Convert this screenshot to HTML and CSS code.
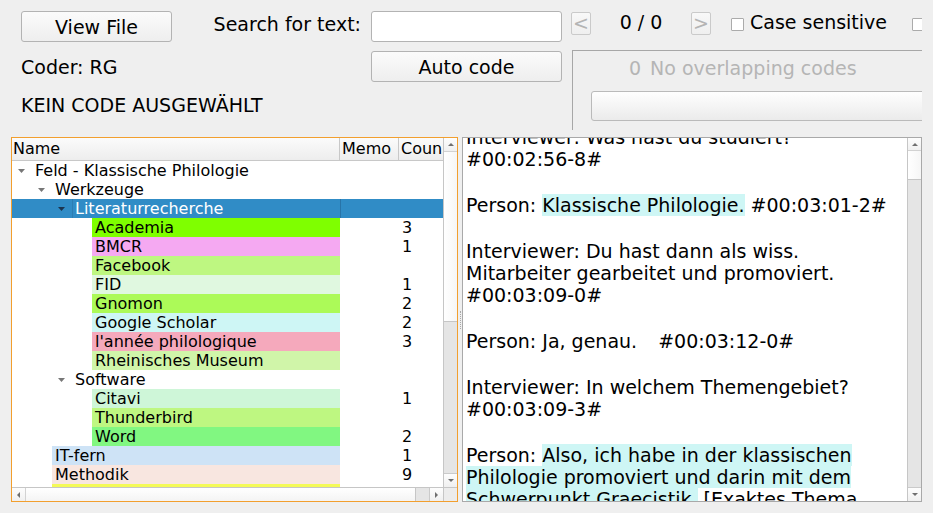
FILE: index.html
```html
<!DOCTYPE html>
<html>
<head>
<meta charset="utf-8">
<link rel="stylesheet" href="styles.css">
</head>
<body>
<div class="app">
  <div class="top">
    <div class="btn viewfile">View File</div>
    <div class="search-label">Search for text:</div>
    <div class="input"></div>
    <div class="searchnav">
      <div class="navbtn">&lt;</div>
      <div class="hits">0 / 0</div>
      <div class="navbtn">&gt;</div>
      <div class="check first"></div>
      <div class="check-label">Case sensitive</div>
      <div class="check second"></div>
    </div>
    <div class="coder">Coder: RG</div>
    <div class="btn autocode">Auto code</div>
    <div class="overlap">
      <div class="overlap-label"><span class="ov-num">0</span><span class="ov-text">No overlapping codes</span></div>
      <div class="combo"></div>
    </div>
    <div class="nocode">KEIN CODE AUSGEWÄHLT</div>
  </div>

  <div class="main">
    <div class="tree">
      <div class="tree-view">
        <div class="hdr">
          <div class="h-name">Name</div>
          <div class="h-memo">Memo</div>
          <div class="h-count">Coun</div>
        </div>
        <div class="row l0"><div class="name"><div class="branch"><svg width="7" height="4" viewBox="0 0 7 4"><path d="M0 0h7L3.5 4z" class="tri"/></svg></div><div class="label">Feld - Klassische Philologie</div></div><div class="memo"></div><div class="count"></div></div>
        <div class="row l1"><div class="name"><div class="branch"><svg width="7" height="4" viewBox="0 0 7 4"><path d="M0 0h7L3.5 4z" class="tri"/></svg></div><div class="label">Werkzeuge</div></div><div class="memo"></div><div class="count"></div></div>
        <div class="row l2 sel"><div class="name"><div class="branch"><svg width="7" height="4" viewBox="0 0 7 4"><path d="M0 0h7L3.5 4z" class="tri"/></svg></div><div class="label">Literaturrecherche</div></div><div class="memo"></div><div class="count"></div></div>
        <div class="row l3"><div class="name"><div class="branch"></div><div class="label c-academia">Academia</div></div><div class="memo"></div><div class="count">3</div></div>
        <div class="row l3"><div class="name"><div class="branch"></div><div class="label c-bmcr">BMCR</div></div><div class="memo"></div><div class="count">1</div></div>
        <div class="row l3"><div class="name"><div class="branch"></div><div class="label c-facebook">Facebook</div></div><div class="memo"></div><div class="count"></div></div>
        <div class="row l3"><div class="name"><div class="branch"></div><div class="label c-fid">FID</div></div><div class="memo"></div><div class="count">1</div></div>
        <div class="row l3"><div class="name"><div class="branch"></div><div class="label c-gnomon">Gnomon</div></div><div class="memo"></div><div class="count">2</div></div>
        <div class="row l3"><div class="name"><div class="branch"></div><div class="label c-google">Google Scholar</div></div><div class="memo"></div><div class="count">2</div></div>
        <div class="row l3"><div class="name"><div class="branch"></div><div class="label c-annee">l'année philologique</div></div><div class="memo"></div><div class="count">3</div></div>
        <div class="row l3"><div class="name"><div class="branch"></div><div class="label c-rhein">Rheinisches Museum</div></div><div class="memo"></div><div class="count"></div></div>
        <div class="row l2"><div class="name"><div class="branch"><svg width="7" height="4" viewBox="0 0 7 4"><path d="M0 0h7L3.5 4z" class="tri"/></svg></div><div class="label">Software</div></div><div class="memo"></div><div class="count"></div></div>
        <div class="row l3"><div class="name"><div class="branch"></div><div class="label c-citavi">Citavi</div></div><div class="memo"></div><div class="count">1</div></div>
        <div class="row l3"><div class="name"><div class="branch"></div><div class="label c-thunder">Thunderbird</div></div><div class="memo"></div><div class="count"></div></div>
        <div class="row l3"><div class="name"><div class="branch"></div><div class="label c-word">Word</div></div><div class="memo"></div><div class="count">2</div></div>
        <div class="row l1"><div class="name"><div class="branch"></div><div class="label c-itfern">IT-fern</div></div><div class="memo"></div><div class="count">1</div></div>
        <div class="row l1"><div class="name"><div class="branch"></div><div class="label c-methodik">Methodik</div></div><div class="memo"></div><div class="count">9</div></div>
        <div class="row l1"><div class="name"><div class="branch"></div><div class="label c-yellow"></div></div><div class="memo"></div><div class="count"></div></div>
      </div>
      <div class="vsb tree-vsb">
        <div class="sb-btn up"><svg width="6" height="3" viewBox="0 0 6 3"><path d="M0 3h6L3 0z" class="sbtri"/></svg></div>
        <div class="sb-handle tree-vh"></div>
        <div class="sb-track"></div>
        <div class="sb-btn down"><svg width="6" height="3" viewBox="0 0 6 3"><path d="M0 0h6L3 3z" class="sbtri"/></svg></div>
      </div>
      <div class="hsb">
        <div class="sb-hbtn left"><svg width="3" height="6" viewBox="0 0 3 6"><path d="M3 0v6L0 3z" class="sbtri"/></svg></div>
        <div class="sb-hhandle"></div>
        <div class="sb-htrack"></div>
        <div class="sb-hbtn right"><svg width="3" height="6" viewBox="0 0 3 6"><path d="M0 0v6L3 3z" class="sbtri"/></svg></div>
      </div>
      <div class="corner"></div>
    </div>

    <div class="splitter"><div class="grip"></div></div>

    <div class="textpanel">
      <div class="doc-wrap">
        <div class="doc">
          <p>Interviewer: Was hast du studiert?<br>#00:02:56-8#</p>
          <p>Person: <mark>Klassische Philologie.</mark> #00:03:01-2#</p>
          <p>Interviewer: Du hast dann als wiss.<br>Mitarbeiter gearbeitet und promoviert.<br>#00:03:09-0#</p>
          <p>Person: Ja, genau.<span class="gap"></span>#00:03:12-0#</p>
          <p>Interviewer: In welchem Themengebiet?<br>#00:03:09-3#</p>
          <p>Person: <mark>Also, ich habe in der klassischen<br>Philologie promoviert und darin mit dem<br>Schwerpunkt Graecistik.</mark> [Exaktes Thema</p>
        </div>
      </div>
      <div class="vsb text-vsb">
        <div class="sb-btn up small"><svg width="6" height="3" viewBox="0 0 6 3"><path d="M0 3h6L3 0z" class="sbtri"/></svg></div>
        <div class="sb-handle text-vh"></div>
        <div class="sb-track"></div>
        <div class="sb-btn down"><svg width="6" height="3" viewBox="0 0 6 3"><path d="M0 0h6L3 3z" class="sbtri"/></svg></div>
      </div>
    </div>
  </div>
</div>
</body>
</html>
```

FILE: styles.css
```css
* { box-sizing: border-box; }
html, body { margin: 0; padding: 0; }
body {
  background: #efefef;
  font-family: "DejaVu Sans", sans-serif;
  color: #000;
}
.app {
  width: 933px;
  height: 513px;
  padding: 11px;
  overflow: hidden;
  display: flex;
  flex-direction: column;
}

/* ---------- top area ---------- */
.top {
  width: 911px;
  height: 126px;
  flex: none;
  overflow: hidden;
  display: grid;
  grid-template-columns: 10px 151px 199px 191px 1fr;
  grid-template-rows: 31px 31px 1fr;
  row-gap: 9px;
  font-size: 19px;
}
.btn {
  border: 1px solid #b3b3b3;
  border-radius: 3px;
  background: linear-gradient(#fbfbfb, #eeeeee);
  display: flex;
  align-items: center;
  justify-content: center;
  color: #000;
}
.viewfile { grid-column: 2; grid-row: 1; }
.search-label {
  grid-column: 3; grid-row: 1;
  text-align: right;
  padding-right: 10px;
  padding-top: 2px;
  white-space: nowrap;
}
.input {
  grid-column: 4; grid-row: 1;
  background: #fff;
  border: 1px solid #b3b3b3;
  border-radius: 3px;
}
.searchnav {
  grid-column: 5; grid-row: 1;
  display: flex;
  align-items: flex-start;
  padding-left: 9px;
  white-space: nowrap;
}
.navbtn {
  width: 20px;
  height: 23px;
  margin-top: 1px;
  border: 1px solid #cacaca;
  border-radius: 2px;
  background: linear-gradient(#f8f8f8, #efefef);
  color: #b4b4b4;
  text-align: center;
  line-height: 20px;
  flex: none;
}
.hits { width: 100px; text-align: center; flex: none; }
.check {
  width: 13px;
  height: 13px;
  margin-top: 7px;
  border: 1px solid #ababab;
  background: #fff;
  border-radius: 1px;
  flex: none;
}
.check.first { margin-left: 20px; }
.check.second { margin-left: 25px; }
.check-label { margin-left: 6px; }

.coder { grid-column: 2 / 4; grid-row: 2; align-self: center; }
.autocode { grid-column: 4; grid-row: 2; }
.overlap {
  grid-column: 5; grid-row: 2 / 4;
  margin-left: 10px;
  margin-top: -1px;
  width: 400px;
  height: 80px;
  border-top: 1px solid #a7a7a7;
  border-left: 1px solid #a7a7a7;
  padding-top: 6px;
  align-self: start;
}
.overlap-label {
  display: flex;
  height: 22px;
  color: #b5b5b5;
  white-space: nowrap;
}
.ov-num { margin-left: 56px; }
.ov-text { margin-left: 9px; }
.combo {
  margin-top: 12px;
  margin-left: 18px;
  width: 380px;
  height: 30px;
  border: 1px solid #bababa;
  border-radius: 3px;
  background: linear-gradient(#fefefe, #ebebeb);
}
.nocode {
  grid-column: 2 / 5; grid-row: 3;
  padding-top: 3px;
  white-space: nowrap;
}

/* ---------- main area ---------- */
.main {
  display: flex;
  height: 365px;
  flex: none;
}
.tree {
  width: 447px;
  flex: none;
  border: 1px solid #f29f2e;
  background: #fff;
  display: grid;
  grid-template-columns: 431px 14px;
  grid-template-rows: 349px 14px;
}
.tree-view {
  overflow: hidden;
  font-size: 16px;
}
.hdr {
  display: flex;
  height: 23px;
  line-height: 22px;
  background: linear-gradient(#fbfbfb, #ededed);
  border-bottom: 1px solid #c8c8c8;
  white-space: nowrap;
}
.h-name { width: 328px; padding-left: 1px; border-right: 1px solid #c8c8c8; }
.h-memo { width: 59px; padding-left: 2px; border-right: 1px solid #c8c8c8; }
.h-count { width: 44px; padding-left: 2px; overflow: hidden; }

.row {
  display: flex;
  height: 19px;
  line-height: 19px;
  white-space: nowrap;
}
.name { width: 328px; display: flex; flex: none; }
.branch {
  flex: none;
  display: flex;
  align-items: center;
  justify-content: flex-end;
  padding-right: 7px;
}
.l0 .branch { width: 20px; }
.l1 .branch { width: 40px; }
.l2 .branch { width: 60px; }
.l3 .branch { width: 80px; }
.tri { fill: #777; }
.label { flex: 1; padding-left: 3px; overflow: hidden; }
.memo { width: 59px; flex: none; }
.count { width: 44px; flex: none; padding-left: 3px; }

.row.sel { background: #308cc6; color: #fff; }
.row.sel .tri { fill: #1b3550; }
.row.sel .label { box-shadow: inset 1px 0 #2b7db3; }
.row.sel .memo { box-shadow: inset 1px 0 #2874a8; }

.c-academia { background: #7fff00; }
.c-bmcr { background: #f5a9f2; }
.c-facebook { background: #bef781; }
.c-fid { background: #e0f8e0; }
.c-gnomon { background: #acfa58; }
.c-google { background: #cef6f5; }
.c-annee { background: #f5a9bc; }
.c-rhein { background: #d0f5a9; }
.c-citavi { background: #cef6d8; }
.c-thunder { background: #bef781; }
.c-word { background: #81f781; }
.c-itfern { background: #cee3f6; }
.c-methodik { background: #f8e6e0; }
.c-yellow { background: #f4fa58; }

/* scrollbars */
.vsb {
  display: flex;
  flex-direction: column;
  background: #e5e5e5;
  border-left: 1px solid #c6c6c6;
}
.sb-btn {
  height: 14px;
  flex: none;
  display: flex;
  align-items: center;
  justify-content: center;
  background: linear-gradient(#fdfdfd, #f0f0f0);
}
.sb-btn.small { height: 13px; }
.sb-btn.up { border-bottom: 1px solid #d2d2d2; }
.sb-btn.down { border-top: 1px solid #cacaca; }
.sbtri { fill: #6f6f6f; }
.sb-handle {
  flex: none;
  background: linear-gradient(90deg, #ffffff, #f6f6f6);
  border-bottom: 1px solid #c6c6c6;
}
.tree-vh { height: 170px; }
.text-vh { height: 29px; }
.sb-track { flex: 1; }

.hsb {
  display: flex;
  background: #e5e5e5;
  border-top: 1px solid #c6c6c6;
}
.sb-hbtn {
  width: 14px;
  flex: none;
  display: flex;
  align-items: center;
  justify-content: center;
  background: linear-gradient(#fdfdfd, #f0f0f0);
}
.sb-hbtn.left { border-right: 1px solid #d2d2d2; }
.sb-hbtn.right { border-left: 1px solid #cacaca; }
.sb-hhandle {
  width: 390px;
  flex: none;
  background: linear-gradient(#ffffff, #f4f4f4);
  border-right: 1px solid #c6c6c6;
}
.sb-htrack { flex: 1; }
.corner {
  background: #ececec;
  border-top: 1px solid #c6c6c6;
  border-left: 1px solid #c6c6c6;
}

.splitter {
  width: 4px;
  flex: none;
  display: flex;
  align-items: center;
  justify-content: center;
}
.grip {
  width: 1px;
  height: 18px;
  border-left: 1px dotted #a8a8a8;
}

.textpanel {
  width: 460px;
  flex: none;
  border: 1px solid #a9a9a9;
  background: #fff;
  display: flex;
}
.doc-wrap {
  flex: 1;
  overflow: hidden;
  padding-left: 3px;
  font-size: 19px;
  line-height: 22px;
  white-space: nowrap;
}
.doc { margin-top: -12px; }
.doc p { margin: 0; }
.doc p + p { margin-top: 24px; }
mark { background: #cef6f5; color: #000; }
.gap { display: inline-block; width: 21px; }
.text-vsb { width: 14px; flex: none; }
```
